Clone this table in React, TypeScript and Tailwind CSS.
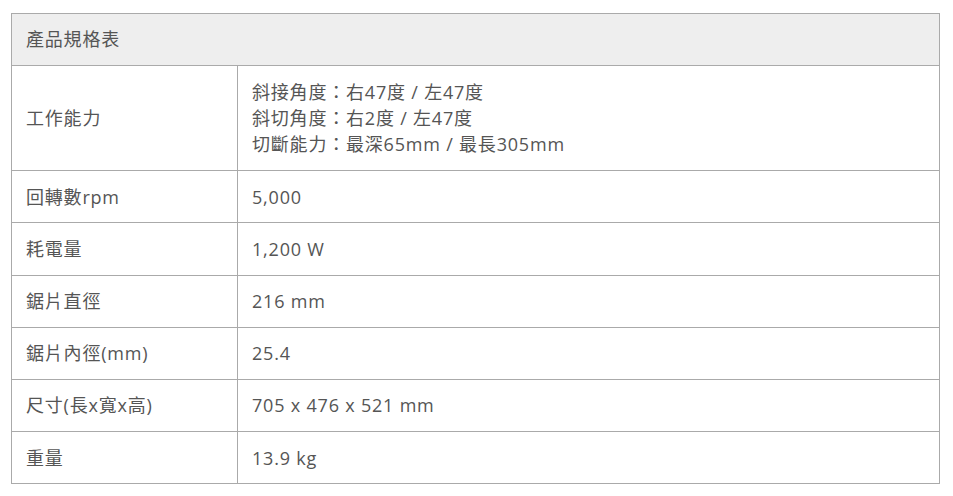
import React from 'react';

const rows: { label: string; value: string[] }[] = [
  {
    label: '工作能力',
    value: ['斜接角度：右47度 / 左47度', '斜切角度：右2度 / 左47度', '切斷能力：最深65mm / 最長305mm'],
  },
  { label: '回轉數rpm', value: ['5,000'] },
  { label: '耗電量', value: ['1,200 W'] },
  { label: '鋸片直徑', value: ['216 mm'] },
  { label: '鋸片內徑(mm)', value: ['25.4'] },
  { label: '尺寸(長x寬x高)', value: ['705 x 476 x 521 mm'] },
  { label: '重量', value: ['13.9 kg'] },
];

export default function App() {
  return (
    <div className="min-h-[496px] w-[953px] bg-white pt-[13px] pl-[11px] font-['Open_Sans','Noto_Sans_CJK_TC',sans-serif] text-[18px] tracking-[0.8px] text-[#555]">
      <table className="w-[929px] table-fixed border-collapse">
        <colgroup>
          <col className="w-[226px]" />
          <col />
        </colgroup>
        <thead>
          <tr>
            <th
              colSpan={2}
              className="border border-[#aaa] bg-[#eee] px-[14px] py-[12.4px] text-left font-normal leading-[26.4px]"
            >
              產品規格表
            </th>
          </tr>
        </thead>
        <tbody>
          {rows.map((row) => (
            <tr key={row.label}>
              <td className="border border-[#aaa] px-[14px] py-[12.4px] align-middle leading-[26.4px]">
                {row.label}
              </td>
              <td className="border border-[#aaa] px-[14px] py-[12.4px] align-middle leading-[26.4px]">
                {row.value.map((line) => (
                  <div key={line}>{line}</div>
                ))}
              </td>
            </tr>
          ))}
        </tbody>
      </table>
    </div>
  );
}
